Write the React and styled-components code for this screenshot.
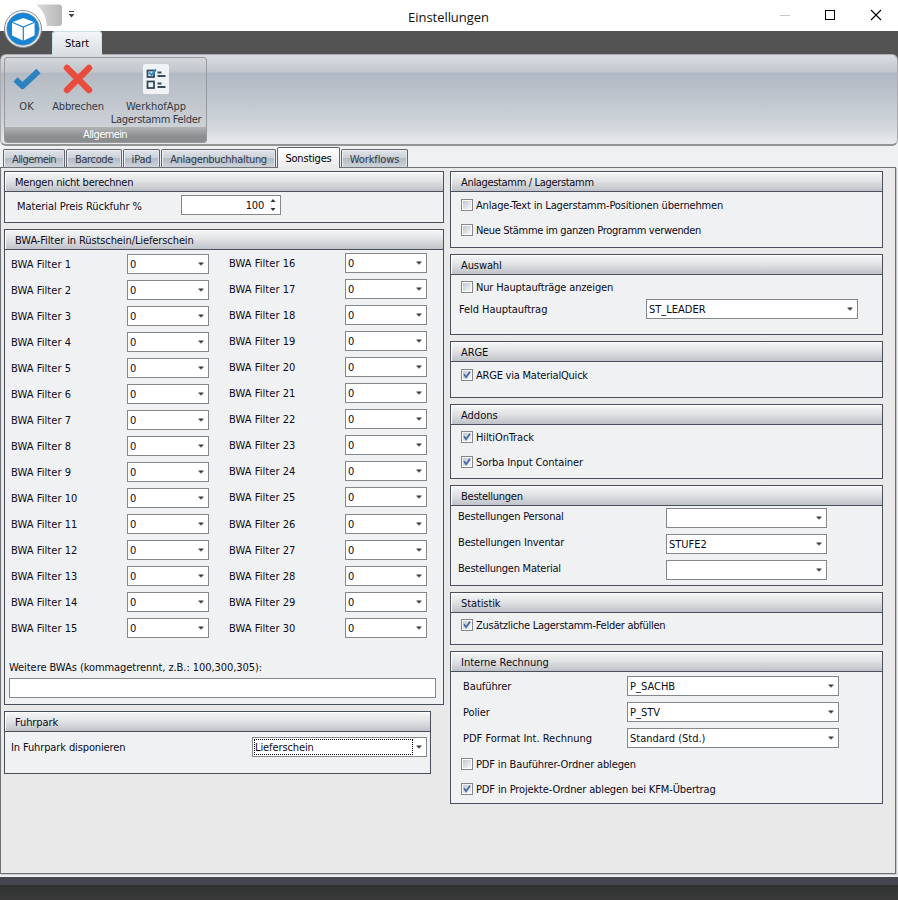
import React from 'react';
import styled, { createGlobalStyle } from 'styled-components';

const Global = createGlobalStyle`
  * { box-sizing: border-box; }
  body { margin: 0; background: #eff0f2; }
  #root { font-family: "DejaVu Sans Condensed", "DejaVu Sans", sans-serif; font-stretch: condensed; font-size: 11px; color: #0b0b18; }
`;

const Window = styled.div`
  width: 898px; height: 900px; display: flex; flex-direction: column; overflow: hidden;
  position: relative; background: #eff0f2;
`;
const TitleBar = styled.header`
  height: 31px; flex: none; background: #fff; display: grid;
  grid-template-columns: 144px 1fr 144px; align-items: center;
`;
const Title = styled.h1`
  margin: 0; padding: 2px 1px 0 0; text-align: center; font-family: "Open Sans", sans-serif; font-stretch: normal;
  font-weight: 400; font-size: 13px; line-height: 20px; color: #111; letter-spacing: -0.05px;
`;
const Controls = styled.svg`display: block; width: 144px; height: 31px;`;
const Quick = styled.svg`position: absolute; left: 0; top: 0; width: 84px; height: 54px; z-index: 2;`;
const RibbonTabs = styled.nav`
  height: 23px; flex: none; background: #535353; padding-left: 52px; display: flex; align-items: flex-end;
`;
const RibbonTab = styled.div`
  width: 50px; height: 24px; border-radius: 4px 4px 0 0; text-align: center; line-height: 25px; margin-bottom: -1px;
  position: relative; z-index: 1; background: linear-gradient(#f4f7f9, #d9dde2); box-shadow: inset 1px 1px #c9e2ec, inset -1px 0 #c9e2ec;
  color: #000;
`;
const RibbonBack = styled.div`height: 92px; flex: none; background: linear-gradient(#535353 50%, #eff0f2 50%); display: flex;`;
const Ribbon = styled.section`
  flex: 1; display: flex; padding: 2px 2px 2px 3px; border: 1px solid #a9abae; border-bottom: 2px solid #929496; border-radius: 6px;
  background: linear-gradient(#d9dde2 0, #c3c7cd 17px, #b0b8c3 18px, #b9c0ca 35px, #d0d6da 70px, #e6e7ea 86px);
`;
const RibbonGroup = styled.div`
  width: 203px; height: 86px; border: 1px solid #97999d; border-radius: 3px; overflow: hidden; display: flex; flex-direction: column;
  background: linear-gradient(#d2d5d9 0, #c3c7cd 14px, #b4bac3 15px, #cdd2d7 70px);
`;
const RibbonItems = styled.div`flex: 1; display: grid; grid-template-columns: 43px 60px 96px;`;
const RibbonButton = styled.div`
  display: flex; flex-direction: column; align-items: center; padding-top: 5px; color: #333a44; text-align: center;
  line-height: 13px; white-space: nowrap;
`;
const Icon = styled.svg`width: 32px; height: 32px; margin-bottom: 5px; flex: none; overflow: visible;`;
const ButtonText = styled.span`letter-spacing: ${p => p.$ls || 0}px;`;
const Caption = styled.div`
  height: 15px; background: linear-gradient(#b2b3b5, #8e8f91 60%, #8a8b8d); color: #fff; text-align: center;
  line-height: 15px; letter-spacing: -0.6px; padding-right: 1px;
`;

const Tabs = styled.nav`
  height: 22px; flex: none; display: flex; align-items: flex-end; gap: 1px; padding-left: 3px; position: relative; z-index: 1;
`;
const Tab = styled.div`
  width: ${p => p.$w}px; height: ${p => (p.$active ? 21 : 18)}px; margin-bottom: ${p => (p.$active ? 0 : 1)}px;
  border: 1px solid #62666c; border-bottom: 0; border-radius: 2px 2px 0 0; text-align: center; white-space: nowrap;
  line-height: ${p => (p.$active ? 22 : 19)}px; letter-spacing: ${p => p.$ls || 0}px;
  color: ${p => (p.$active ? '#000' : '#333b48')};
  background: ${p => (p.$active ? 'linear-gradient(#fff, #e9e9e9)' : 'linear-gradient(#e0e4e9 0, #cdd2d9 45%, #b3bbc7 50%, #ccd3da)')};
  box-shadow: ${p => (p.$active ? 'none' : 'inset 1px 1px #edf0f3, inset -1px 0 #dfe3e8')};
`;
const Page = styled.main`
  width: 896px; height: 707px; margin-top: -1px; flex: none; border: 1px solid #707276; background: #e9e9e9;
  display: flex; gap: 6px; padding: 3px 0 0 3px; box-shadow: 1px 1px #c8c9ca;
`;
const Column = styled.div`width: ${p => p.$w}px; display: flex; flex-direction: column; gap: 6px;`;
const Group = styled.section`
  width: ${p => p.$w || 433}px; height: ${p => p.$h}px; border: 1px solid #4b4f5b; background: #f0f1f3; flex: none;
`;
const GroupHead = styled.h2`
  margin: 0; height: 20px; border-bottom: 1px solid #4b4f5b; padding-left: 10px; font: inherit; line-height: 22px;
  letter-spacing: ${p => p.$ls || 0}px;
  background: linear-gradient(#f6f7f8, #dfe1e3 50%, #bfc2c8); box-shadow: inset 1px 1px #fff;
`;
const Row = styled.div`
  height: 20px; display: flex; align-items: center; margin-top: ${p => p.$mt || 0}px; padding-left: ${p => p.$pl || 0}px;
`;
const Label = styled.label`
  width: ${p => p.$w}px; flex: none; white-space: nowrap; line-height: 20px; letter-spacing: ${p => p.$ls || 0}px;
  padding-top: 2px; margin-top: ${p => p.$shift || 0}px;
`;
const Field = styled.div`
  width: ${p => p.$w}px; height: 20px; flex: none; border: 1px solid #85878b; background: #fff; display: flex;
  align-items: center; justify-content: space-between; padding: 0 4px 0 2px; line-height: 18px; white-space: nowrap;
`;
const Value = styled.span`padding-top: 2px; letter-spacing: ${p => p.$ls || 0}px;`;
const FocusedValue = styled.span`
  width: 159px; height: 16px; line-height: 16px; margin-left: -1px; border: 1px dotted #000; flex: none; letter-spacing: -0.1px;
`;
const SpinValue = styled.span`flex: 1; text-align: right; padding: 2px 6px 0 0; letter-spacing: -0.2px;`;
const Arrow = styled.svg`width: 6px; height: 4px; flex: none;`;
const SpinArrows = styled.svg`width: 6px; height: 14px; flex: none;`;
const FilterGrid = styled.div`display: flex; padding: 4px 0 0 6px; height: 408px;`;
const FilterColumn = styled.div`
  width: 218px; flex: none; display: flex; flex-direction: column; gap: 6px; margin-top: ${p => p.$shift || 0}px;
`;
const CheckRow = styled.div`
  height: 12px; display: flex; align-items: center; gap: 3px; padding-left: 10px; margin-top: ${p => p.$mt}px;
  line-height: 12px; white-space: nowrap; letter-spacing: ${p => p.$ls || 0}px;
`;
const CheckText = styled.span`padding-top: 2px;`;
const Box = styled.svg`width: 12px; height: 12px; flex: none;`;
const Status = styled.footer`
  margin-top: 3px; flex: 1; border-top: 8px solid #444650; background: linear-gradient(#303232, #3a3a3a);
`;

const Select = ({ w, value, focus, ls }) => (
  <Field $w={w}>
    {focus ? <FocusedValue>{value}</FocusedValue> : <Value $ls={ls}>{value}</Value>}
    <Arrow viewBox="0 0 6 4"><path d="M0.5 0.5h5v1h-1v1h-1v1h-1v-1h-1v-1h-1z" fill="#333" /></Arrow>
  </Field>
);

const Check = ({ checked, mt, ls, children }) => (
  <CheckRow $mt={mt} $ls={ls}>
    <Box viewBox="0 0 12 12">
      <defs>
        <linearGradient id="boxFill" x1="0" y1="0" x2="1" y2="1">
          <stop offset="0" stopColor="#c3c7cc" /><stop offset="1" stopColor="#f6f7f8" />
        </linearGradient>
      </defs>
      <rect x=".5" y=".5" width="11" height="11" fill="#fbfbfc" stroke="#85878b" />
      <rect x="2" y="2" width="8" height="8" fill="url(#boxFill)" />
      {checked && <path d="M3 5.3 L5.1 8.3 L9 2.8" fill="none" stroke="#4669a5" strokeWidth="1.8" />}
    </Box>
    <CheckText>{children}</CheckText>
  </CheckRow>
);

const Filter = ({ n, mt }) => (
  <Row $mt={mt}><Label $w={116} $ls={0.06}>BWA Filter {n}</Label><Select w={82} value="0" /></Row>
);

const SelectRow = ({ label, lw, w, value, mt, pl, shift, ls, focus }) => (
  <Row $mt={mt} $pl={pl}>
    <Label $w={lw} $shift={shift} $ls={ls}>{label}</Label>
    <Select w={w} value={value} focus={focus} />
  </Row>
);

const filters = Array.from({ length: 15 }, (_, i) => i + 1);

export default function App() {
  return (
    <Window>
      <Global />
      <Quick viewBox="0 0 84 54">
        <defs>
          <linearGradient id="qa" x1="0" x2="1"><stop offset="0" stopColor="#dadada" /><stop offset="1" stopColor="#b8b8b8" /></linearGradient>
          <linearGradient id="ring" x1="0" y1="0" x2="0" y2="1"><stop offset="0" stopColor="#fff" /><stop offset="1" stopColor="#dfe2e4" /></linearGradient>
        </defs>
        <path d="M36 4.5H59Q62 4.5 62 7.5V23Q62 26 59 26H47Q46 12 36 4.5Z" fill="url(#qa)" />
        <circle cx="23" cy="29" r="18.5" fill="url(#ring)" stroke="#8b8e91" strokeWidth="1" />
        <circle cx="23" cy="29" r="16.2" fill="#1785d5" stroke="#6b8ba5" strokeWidth=".6" />
        <path d="M23.3 18 L34.6 22.3 V35.5 L23.3 40.8 L12 35.5 V22.3Z" fill="#fff" />
        <path d="M12 22.3 L23.3 27 L34.6 22.3 M23.3 27V41" fill="none" stroke="#1785d5" strokeWidth="1.2" />
        <path d="M69 11.5h5" stroke="#444" /><path d="M68.5 14h6l-3 3.5z" fill="#444" />
      </Quick>
      <TitleBar>
        <span />
        <Title>Einstellungen</Title>
        <Controls viewBox="0 0 144 31" shapeRendering="crispEdges">
          <path d="M26 15.5h10" stroke="#c8c8c8" />
          <rect x="71.5" y="10.5" width="9" height="9" fill="none" stroke="#000" />
          <path d="M117 10l10 10M127 10l-10 10" stroke="#000" shapeRendering="auto" strokeWidth="1.1" />
        </Controls>
      </TitleBar>
      <RibbonTabs><RibbonTab>Start</RibbonTab></RibbonTabs>
      <RibbonBack>
        <Ribbon>
          <RibbonGroup>
            <RibbonItems>
              <RibbonButton>
                <Icon viewBox="0 0 32 32"><path d="M4.5 16.5 L11.5 23 L27.5 8" fill="none" stroke="#2c82c0" strokeWidth="6" strokeLinejoin="round" /></Icon>
                OK
              </RibbonButton>
              <RibbonButton>
                <Icon viewBox="0 0 32 32"><path d="M5 5L27 27M27 5L5 27" stroke="#ea4c3b" strokeWidth="6.4" strokeLinecap="round" /></Icon>
                <ButtonText $ls={-0.2}>Abbrechen</ButtonText>
              </RibbonButton>
              <RibbonButton>
                <Icon viewBox="0 0 32 32">
                  <rect x="3" y="1" width="26" height="30" rx="2" fill="#f0f3f5" />
                  <g fill="none" stroke="#34495e" strokeWidth="1.8">
                    <rect x="7.5" y="7.5" width="6.5" height="6.5" /><rect x="7.5" y="18.5" width="6.5" height="6.5" />
                    <path d="M17.5 9.5h4M17.5 13h8M17.5 20.5h4M17.5 24h8" />
                  </g>
                  <path d="M9 9.5l2.5 2.5 4.5-5.5" fill="none" stroke="#2c8fd0" strokeWidth="2" />
                </Icon>
                <ButtonText>WerkhofApp</ButtonText>
                <ButtonText $ls={-0.33}>Lagerstamm Felder</ButtonText>
              </RibbonButton>
            </RibbonItems>
            <Caption>Allgemein</Caption>
          </RibbonGroup>
        </Ribbon>
      </RibbonBack>
      <Tabs>
        <Tab $w={62} $ls={-0.6}>Allgemein</Tab>
        <Tab $w={56} $ls={-0.35}>Barcode</Tab>
        <Tab $w={37} $ls={-0.2}>iPad</Tab>
        <Tab $w={115} $ls={-0.33}>Anlagenbuchhaltung</Tab>
        <Tab $w={63} $ls={-0.2} $active>Sonstiges</Tab>
        <Tab $w={67} $ls={-0.1}>Workflows</Tab>
      </Tabs>
      <Page>
        <Column $w={440}>
          <Group $w={440} $h={52}>
            <GroupHead $ls={-0.22}>Mengen nicht berechnen</GroupHead>
            <Row $mt={3} $pl={12}>
              <Label $w={164} $shift={2} $ls={-0.07}>Material Preis Rückfuhr %</Label>
              <Field $w={100}>
                <SpinValue>100</SpinValue>
                <SpinArrows viewBox="0 0 6 14"><path d="M.5 4h5l-2.5-3zM.5 10h5l-2.5 3z" fill="#333" /></SpinArrows>
              </Field>
            </Row>
          </Group>
          <Group $w={440} $h={476}>
            <GroupHead $ls={-0.1}>BWA-Filter in Rüstschein/Lieferschein</GroupHead>
            <FilterGrid>
              <FilterColumn>{filters.map(n => <Filter key={n} n={n} />)}</FilterColumn>
              <FilterColumn $shift={-1}>{filters.map(n => <Filter key={n} n={n + 15} mt={n === 11 ? 1 : 0} />)}</FilterColumn>
            </FilterGrid>
            <Row $pl={4}><Label $ls={-0.06} $shift={-2}>Weitere BWAs (kommagetrennt, z.B.: 100,300,305):</Label></Row>
            <Row $pl={4}><Field $w={427} /></Row>
          </Group>
          <Group $w={427} $h={63}>
            <GroupHead $ls={-0.1}>Fuhrpark</GroupHead>
            <SelectRow label="In Fuhrpark disponieren" ls={-0.12} lw={241} w={175} value="Lieferschein" focus mt={5} pl={6} />
          </Group>
        </Column>
        <Column $w={433}>
          <Group $h={77}>
            <GroupHead $ls={-0.33}>Anlagestamm / Lagerstamm</GroupHead>
            <Check mt={7} ls={-0.17}>Anlage-Text in Lagerstamm-Positionen übernehmen</Check>
            <Check mt={13} ls={-0.33}>Neue Stämme im ganzen Programm verwenden</Check>
          </Group>
          <Group $h={81}>
            <GroupHead $ls={-0.1}>Auswahl</GroupHead>
            <Check mt={6} ls={-0.15}>Nur Hauptaufträge anzeigen</Check>
            <SelectRow label="Feld Hauptauftrag" ls={-0.05} lw={187} w={212} value="ST_LEADER" mt={6} pl={8} />
          </Group>
          <Group $h={57}>
            <GroupHead $ls={-0.1}>ARGE</GroupHead>
            <Check mt={7} ls={-0.22} checked>ARGE via MaterialQuick</Check>
          </Group>
          <Group $h={75}>
            <GroupHead>Addons</GroupHead>
            <Check mt={6} ls={-0.12} checked>HiltiOnTrack</Check>
            <Check mt={13} ls={-0.1} checked>Sorba Input Container</Check>
          </Group>
          <Group $h={101}>
            <GroupHead $ls={-0.25}>Bestellungen</GroupHead>
            <SelectRow label="Bestellungen Personal" ls={-0.2} lw={208} w={161} value="" mt={2} pl={7} shift={-4} />
            <SelectRow label="Bestellungen Inventar" ls={-0.15} lw={208} w={161} value="STUFE2" mt={6} pl={7} shift={-4} />
            <SelectRow label="Bestellungen Material" ls={-0.25} lw={208} w={161} value="" mt={6} pl={7} shift={-4} />
          </Group>
          <Group $h={53}>
            <GroupHead $ls={-0.1}>Statistik</GroupHead>
            <Check mt={6} ls={-0.26} checked>Zusätzliche Lagerstamm-Felder abfüllen</Check>
          </Group>
          <Group $h={153}>
            <GroupHead>Interne Rechnung</GroupHead>
            <SelectRow label="Bauführer" ls={-0.1} lw={164} w={212} value="P_SACHB" mt={4} pl={12} />
            <SelectRow label="Polier" ls={-0.1} lw={164} w={212} value="P_STV" mt={6} pl={12} />
            <SelectRow label="PDF Format Int. Rechnung" lw={164} w={212} value="Standard (Std.)" mt={6} pl={12} />
            <Check mt={10} ls={-0.14}>PDF in Bauführer-Ordner ablegen</Check>
            <Check mt={13} ls={-0.13} checked>PDF in Projekte-Ordner ablegen bei KFM-Übertrag</Check>
          </Group>
        </Column>
      </Page>
      <Status />
    </Window>
  );
}
